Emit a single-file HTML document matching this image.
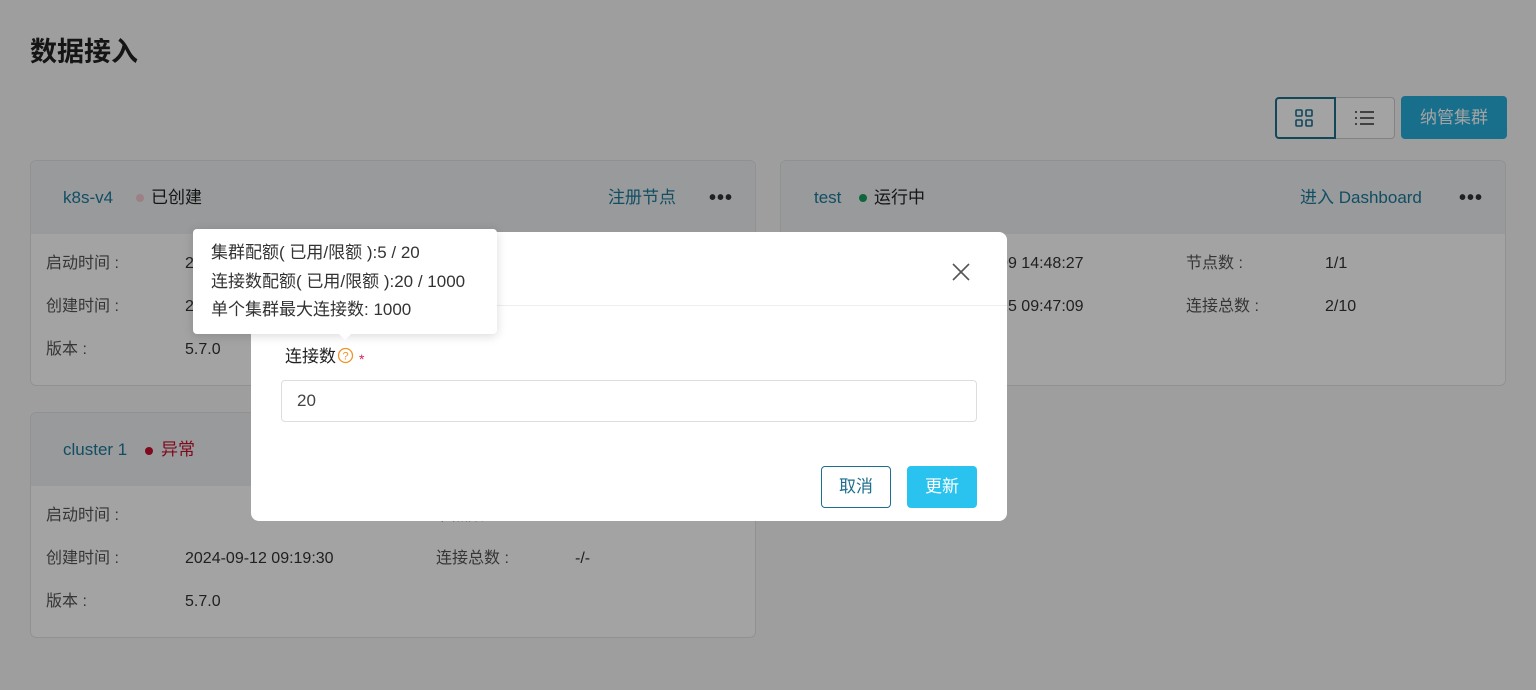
<!DOCTYPE html>
<html><head><meta charset="utf-8"><style>
*{box-sizing:border-box;margin:0;padding:0}
body{width:1536px;height:690px;overflow:hidden;background:#f7f7f7;position:relative;font-family:"Liberation Sans","Noto Sans CJK SC",sans-serif;color:#333;font-size:16px}
.a{position:absolute;white-space:nowrap;line-height:22px}
.card{position:absolute;width:726px;height:226px;background:#fff;border:1px solid #e3e3e3;border-radius:6px;overflow:hidden}
.card .hd{position:absolute;left:0;top:0;right:0;height:73px;background:#eef1f5}
.link{color:#1d7a9a}
.lbl{color:#555}
.ov{position:absolute;left:0;top:0;width:1536px;height:690px;background:rgba(0,0,0,0.36)}
.dots{font-size:20px;letter-spacing:1px;font-weight:bold;color:#333;line-height:20px}
</style></head><body>
<div class="a" style="left:30px;top:36px;font-size:27px;line-height:32px;font-weight:bold;color:#222">数据接入</div>
<div class="a" style="left:1275px;top:97px;width:61px;height:42px;border:2px solid #1d6f8e;border-radius:4px 0 0 4px;background:#fff"></div>
<svg class="a" style="left:1295px;top:109px" width="18" height="18" fill="none" stroke="#1d6f8e" stroke-width="1.6"><rect x="1" y="1" width="6" height="6" rx="1"/><rect x="11" y="1" width="6" height="6" rx="1"/><rect x="1" y="11" width="6" height="6" rx="1"/><rect x="11" y="11" width="6" height="6" rx="1"/></svg>
<div class="a" style="left:1336px;top:97px;width:59px;height:42px;border:1px solid #ccc;border-left:none;border-radius:0 4px 4px 0;background:#fff"></div>
<svg class="a" style="left:1355px;top:110px" width="20" height="16" stroke="#333" stroke-width="1.5"><line x1="0" y1="2" x2="2" y2="2"/><line x1="5" y1="2" x2="19" y2="2"/><line x1="0" y1="8" x2="2" y2="8"/><line x1="5" y1="8" x2="19" y2="8"/><line x1="0" y1="14" x2="2" y2="14"/><line x1="5" y1="14" x2="19" y2="14"/></svg>
<div class="a" style="left:1401px;top:96px;width:106px;height:43px;background:#27aedb;border-radius:4px;color:#fff;text-align:center;line-height:43px;font-size:17px">纳管集群</div>

<div class="card" style="left:30px;top:160px"><div class="hd"></div>
<div class="a link" style="left:32px;top:26px;font-size:17px">k8s-v4</div>
<div class="a" style="left:105px;top:33px;width:8px;height:8px;border-radius:50%;background:#f3c9d2"></div>
<div class="a" style="left:120px;top:26px;color:#222;font-size:17px">已创建</div>
<div class="a link" style="left:577px;top:26px;font-size:17px">注册节点</div>
<div class="a dots" style="left:678px;top:27px">•••</div>
<div class="a lbl" style="left:15px;top:92px">启动时间 :</div><div class="a" style="left:154px;top:92px">2024-09-09 14:48:27</div>
<div class="a lbl" style="left:15px;top:135px">创建时间 :</div><div class="a" style="left:154px;top:135px">2024-09-09 14:48:27</div>
<div class="a lbl" style="left:15px;top:178px">版本 :</div><div class="a" style="left:154px;top:178px">5.7.0</div>
<div class="a lbl" style="left:405px;top:92px">节点数 :</div><div class="a" style="left:544px;top:92px">0/0</div>
<div class="a lbl" style="left:405px;top:135px">连接总数 :</div><div class="a" style="left:544px;top:135px">0/10</div>
</div>

<div class="card" style="left:780px;top:160px"><div class="hd"></div>
<div class="a link" style="left:33px;top:26px;font-size:17px">test</div>
<div class="a" style="left:78px;top:33px;width:8px;height:8px;border-radius:50%;background:#1a9e5c"></div>
<div class="a" style="left:93px;top:26px;color:#222;font-size:17px">运行中</div>
<div class="a link" style="left:519px;top:26px;font-size:17px">进入 Dashboard</div>
<div class="a dots" style="left:678px;top:27px">•••</div>
<div class="a lbl" style="left:15px;top:92px">启动时间 :</div><div class="a" style="left:154px;top:92px">2024-09-09 14:48:27</div>
<div class="a lbl" style="left:15px;top:135px">创建时间 :</div><div class="a" style="left:154px;top:135px">2024-09-25 09:47:09</div>
<div class="a lbl" style="left:15px;top:178px">版本 :</div><div class="a" style="left:154px;top:178px">5.7.0</div>
<div class="a lbl" style="left:405px;top:92px">节点数 :</div><div class="a" style="left:544px;top:92px">1/1</div>
<div class="a lbl" style="left:405px;top:135px">连接总数 :</div><div class="a" style="left:544px;top:135px">2/10</div>
</div>

<div class="card" style="left:30px;top:412px"><div class="hd"></div>
<div class="a link" style="left:32px;top:26px;font-size:17px">cluster 1</div>
<div class="a" style="left:114px;top:34px;width:8px;height:8px;border-radius:50%;background:#c8102e"></div>
<div class="a" style="left:130px;top:26px;color:#c8102e;font-size:17px">异常</div>
<div class="a lbl" style="left:15px;top:92px">启动时间 :</div>
<div class="a lbl" style="left:15px;top:135px">创建时间 :</div><div class="a" style="left:154px;top:135px">2024-09-12 09:19:30</div>
<div class="a lbl" style="left:15px;top:178px">版本 :</div><div class="a" style="left:154px;top:178px">5.7.0</div>
<div class="a lbl" style="left:405px;top:92px">节点数 :</div><div class="a" style="left:544px;top:92px">-/-</div>
<div class="a lbl" style="left:405px;top:135px">连接总数 :</div><div class="a" style="left:544px;top:135px">-/-</div>
</div>

<div class="ov"></div>

<div class="a" style="left:251px;top:232px;width:756px;height:289px;background:#fff;border-radius:8px">
<div class="a" style="left:0;top:73px;width:756px;height:1px;background:#eee"></div>
<svg class="a" style="left:701px;top:31px" width="18" height="18" stroke="#555" stroke-width="1.6"><line x1="1" y1="1" x2="17" y2="17"/><line x1="17" y1="1" x2="1" y2="17"/></svg>
<div class="a" style="left:34px;top:114px;color:#222;font-size:17px">连接数</div>
<svg class="a" style="left:86px;top:115px" width="17" height="17"><circle cx="8.5" cy="8.5" r="7" fill="none" stroke="#f0932b" stroke-width="1.3"/><text x="8.5" y="12.5" font-size="11" text-anchor="middle" fill="#f0932b" font-family="Liberation Sans">?</text></svg>
<div class="a" style="left:108px;top:116px;color:#d0245a;font-size:14px">*</div>
<div class="a" style="left:30px;top:148px;width:696px;height:42px;border:1px solid #ddd;border-radius:4px;padding-left:15px;line-height:40px;color:#444;font-size:17px">20</div>
<div class="a" style="left:570px;top:234px;width:70px;height:42px;border:1.5px solid #1d6f8e;border-radius:4px;text-align:center;line-height:39px;color:#1d6f8e;font-size:17px">取消</div>
<div class="a" style="left:656px;top:234px;width:70px;height:42px;background:#2ac3ef;border-radius:4px;text-align:center;line-height:42px;color:#fff;font-size:17px">更新</div>
</div>

<div class="a" style="left:193px;top:229px;width:304px;height:105px;background:#fff;border-radius:4px;box-shadow:0 2px 10px rgba(0,0,0,.15);font-size:17px;color:#333;line-height:28.5px;padding:10px 0 0 18px">集群配额( 已用/限额 ):5 / 20<br>连接数配额( 已用/限额 ):20 / 1000<br>单个集群最大连接数: 1000</div>
<div class="a" style="left:338px;top:333px;width:0;height:0;border-left:7px solid transparent;border-right:7px solid transparent;border-top:7px solid #fff"></div>
</body></html>
